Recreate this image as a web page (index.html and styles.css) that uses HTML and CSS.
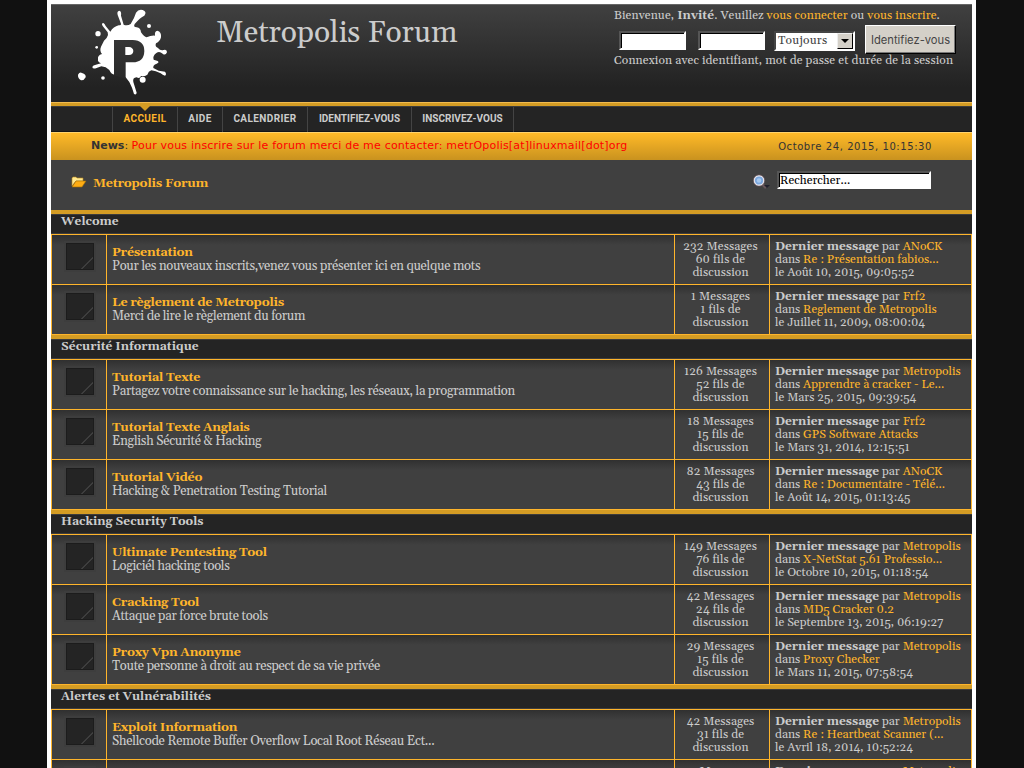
FILE: index.html
```html
<!DOCTYPE html>
<html lang="fr">
<head>
<meta charset="utf-8">
<title>Metropolis Forum</title>
<link rel="stylesheet" href="styles.css">
</head>
<body>
<div class="wrapper">
<header class="header">
  <svg class="logo" width="92" height="90" viewBox="111 27 276 270">
    <path d="M157 201Q158 196 165 195L183 190Q172 186 174 178Q172 166 186 162Q178 152 183 140Q188 130 192 122Q202 114 204 105L203 97L188 78Q183 70 190 69Q194 70 197 78L211 95Q220 80 236 76Q244 76 243 71L233 45Q230 33 238 32Q245 34 243 47L251 74Q262 78 272 72Q283 55 288 38Q295 27 308 30Q322 35 313 47Q300 53 284 72Q279 82 290 82Q302 84 303 97Q312 110 320 112Q333 106 345 107Q343 93 352 92Q365 95 363 112Q360 124 348 130Q344 140 353 143Q362 153 370 150Q381 146 381 157Q376 168 368 161Q358 152 349 159Q337 168 341 179L353 183Q359 188 350 191Q338 195 340 204L356 212L375 215Q381 223 375 227Q368 226 362 220Q347 212 334 211Q325 214 322 224Q313 230 303 228Q299 237 290 232Q277 233 280 246L290 278Q289 286 282 282L276 263Q271 247 257 232L224 224Q214 224 208 210Q198 200 184 199L168 205Q157 207 157 201Z"/>
    <circle cx="174" cy="101" r="8"/><circle cx="327" cy="78" r="6"/><circle cx="170" cy="142" r="4"/><path d="M114 224Q119 215 126 219Q139 223 137 232Q132 242 123 241Q113 235 114 224Z"/><circle cx="189" cy="234" r="5.500"/><circle cx="308" cy="239" r="9"/>
    <path fill="url(#shade)" d="M222 120H278Q313 121 313 153Q312 187 278 187H257V236L222 226Z"/><path d="M256 141H267Q279 142 280 153Q279 165 267 165H256Z"/>
    <defs><linearGradient id="shade" x2="0" y2="1"><stop stop-color="#363636"/><stop offset="1" stop-color="#292929"/></linearGradient></defs>
  </svg>
  <h1 class="site-title"><span>Metropolis Forum</span></h1>
  <div class="login">
    <p class="welcome">Bienvenue, <b>Invité</b>. Veuillez <a>vous connecter</a> ou <a>vous inscrire</a>.</p>
    <div class="login-row"><input class="field user"><input class="field pass" type="password"><div class="select"><span>Toujours</span><i></i></div><button class="submit">Identifiez-vous</button></div>
    <p class="hint">Connexion avec identifiant, mot de passe et durée de la session</p>
  </div>
</header>
<div class="gold"></div>
<nav class="nav"><a class="active n1">Accueil</a><a class="n2">Aide</a><a class="n3">Calendrier</a><a class="n4">Identifiez-vous</a><a class="n5">Inscrivez-vous</a></nav>
<div class="news"><span class="news-text"><b>News</b>: <em>Pour vous inscrire sur le forum merci de me contacter: metrOpolis[at]linuxmail[dot]org</em></span><span class="date">Octobre 24, 2015, 10:15:30</span></div>
<div class="crumbs">
  <svg class="folder" width="16" height="12" viewBox="0 0 16 12"><path fill="#ffe991" stroke="#b98717" stroke-width=".6" d="M1 10V2L2 1H5L6 2H12V5H5Z"/><path fill="#ffad13" stroke="#9f6b08" stroke-width=".6" d="M1 11L5 5H15L11 11Z"/></svg>
  <span class="crumb">Metropolis Forum</span>
  <svg class="magnifier" width="18" height="16" viewBox="0 0 18 16"><path stroke="#66565a" stroke-width="2.500" d="M9 10L13 14"/><circle cx="6" cy="6.500" r="4.800" fill="#7ba7de" stroke="#e4e4eb" stroke-width="1.400"/><circle cx="6" cy="6.500" r="5.700" fill="none" stroke="#6f565a" stroke-width=".6"/><circle cx="6" cy="6.500" r="2.300" fill="#a7c9ef"/><path fill="#20202c" d="M11 11H17L14 14Z"/></svg>
  <input class="field search" value="Rechercher...">
</div>
<main>
<section><h2>Welcome</h2>
<div class="row"><div class="ico"><i></i></div><div class="desc"><h3>Présentation</h3><p>Pour les nouveaux inscrits,venez vous présenter ici en quelque mots</p></div><div class="stats">232 Messages<br>60 fils de<br>discussion</div><div class="last"><b>Dernier message</b> par <a>ANoCK</a><br>dans <a>Re : Présentation fabios...</a><br>le Août 10, 2015, 09:05:52</div></div>
<div class="row"><div class="ico"><i></i></div><div class="desc"><h3>Le règlement de Metropolis</h3><p>Merci de lire le règlement du forum</p></div><div class="stats">1 Messages<br>1 fils de<br>discussion</div><div class="last"><b>Dernier message</b> par <a>Frf2</a><br>dans <a>Reglement de Metropolis</a><br>le Juillet 11, 2009, 08:00:04</div></div>
</section>
<section><h2>Sécurité Informatique</h2>
<div class="row"><div class="ico"><i></i></div><div class="desc"><h3>Tutorial Texte</h3><p>Partagez votre connaissance sur le hacking, les réseaux, la programmation</p></div><div class="stats">126 Messages<br>52 fils de<br>discussion</div><div class="last"><b>Dernier message</b> par <a>Metropolis</a><br>dans <a>Apprendre à cracker - Le...</a><br>le Mars 25, 2015, 09:39:54</div></div>
<div class="row"><div class="ico"><i></i></div><div class="desc"><h3>Tutorial Texte Anglais</h3><p>English Sécurité &amp; Hacking</p></div><div class="stats">18 Messages<br>15 fils de<br>discussion</div><div class="last"><b>Dernier message</b> par <a>Frf2</a><br>dans <a>GPS Software Attacks</a><br>le Mars 31, 2014, 12:15:51</div></div>
<div class="row"><div class="ico"><i></i></div><div class="desc"><h3>Tutorial Vidéo</h3><p>Hacking &amp; Penetration Testing Tutorial</p></div><div class="stats">82 Messages<br>43 fils de<br>discussion</div><div class="last"><b>Dernier message</b> par <a>ANoCK</a><br>dans <a>Re : Documentaire - Télé...</a><br>le Août 14, 2015, 01:13:45</div></div>
</section>
<section><h2>Hacking Security Tools</h2>
<div class="row"><div class="ico"><i></i></div><div class="desc"><h3>Ultimate Pentesting Tool</h3><p>Logiciél hacking tools</p></div><div class="stats">149 Messages<br>76 fils de<br>discussion</div><div class="last"><b>Dernier message</b> par <a>Metropolis</a><br>dans <a>X-NetStat 5.61 Professio...</a><br>le Octobre 10, 2015, 01:18:54</div></div>
<div class="row"><div class="ico"><i></i></div><div class="desc"><h3>Cracking Tool</h3><p>Attaque par force brute tools</p></div><div class="stats">42 Messages<br>24 fils de<br>discussion</div><div class="last"><b>Dernier message</b> par <a>Metropolis</a><br>dans <a>MD5 Cracker 0.2</a><br>le Septembre 13, 2015, 06:19:27</div></div>
<div class="row"><div class="ico"><i></i></div><div class="desc"><h3>Proxy Vpn Anonyme</h3><p>Toute personne à droit au respect de sa vie privée</p></div><div class="stats">29 Messages<br>15 fils de<br>discussion</div><div class="last"><b>Dernier message</b> par <a>Metropolis</a><br>dans <a>Proxy Checker</a><br>le Mars 11, 2015, 07:58:54</div></div>
</section>
<section><h2>Alertes et Vulnérabilités</h2>
<div class="row"><div class="ico"><i></i></div><div class="desc"><h3>Exploit Information</h3><p>Shellcode Remote Buffer Overflow Local Root Réseau Ect...</p></div><div class="stats">42 Messages<br>31 fils de<br>discussion</div><div class="last"><b>Dernier message</b> par <a>Metropolis</a><br>dans <a>Re : Heartbeat Scanner (...</a><br>le Avril 18, 2014, 10:52:24</div></div>
<div class="row"><div class="ico"><i></i></div><div class="desc"></div><div class="stats">7 Messages</div><div class="last"><b>Dernier message</b> par <a>Metropolis</a></div></div>
</section>
</main>
</div>
</body>
</html>
```
FILE: styles.css
```css
* { box-sizing: border-box; }
body { margin: 0; height: 768px; overflow: hidden; background: #111; color: #ccc; font: 12px/13px Georgia, Gelasio, "Liberation Serif", serif; }
h1, h2, h3, p { margin: 0; }
a { color: #ffb52b; }
.wrapper { width: 929px; height: 768px; margin-left: 47px; overflow: hidden; border: solid #fff; border-width: 4px 4px 0; background: #404040; }
.header { height: 98px; display: flex; align-items: flex-start; border-top: 1px solid #666; background: linear-gradient(#404040, #222 85%); }
.logo { flex: none; margin: 4px 0 0 26px; fill: #fff; }
.site-title { flex: none; width: 445px; padding: 10px 0 0 47px; font-size: 30px; line-height: 36px; letter-spacing: -.05px; font-weight: 400; white-space: nowrap; }
.login { flex: none; width: 350px; white-space: nowrap; }
.welcome, .hint { letter-spacing: .11px; }
.welcome { padding-top: 4px; }
.login-row { height: 31px; display: flex; align-items: flex-start; padding: 3px 0 0 4px; }
.field { border: 2px solid; border-color: #555 #fff #fff #555; outline: 0; background: #fff; padding: 0; font: 12px/14px Georgia, Gelasio, "Liberation Serif", serif; border-radius: 0; box-shadow: inset 1px 1px #000; color: #000; }
.user, .pass { width: 67px; height: 19px; margin: 6px 12px 0 1px; }
.pass { margin: 6px 9px 0 0; }
.select { width: 81px; height: 20px; display: flex; justify-content: space-between; margin: 6px 10px 0 0; padding: 0 0 0 2px; border: 2px solid; border-color: #444 #fff #fff #444; background: #fff; color: #444; line-height: 15px; letter-spacing: .2px; }
.select i { width: 16px; height: 16px; border: 1px solid; border-color: #eee #000 #000 #eee; background: #d4d0c8; display: grid; place-items: center; }
.select i::before { content: ""; border: 4px solid transparent; border-top-color: #000; border-bottom: 0; }
.submit { width: 91px; height: 29px; padding: 0; border: 1px solid; border-color: #fff #000 #000 #fff; box-shadow: inset -1px -1px #777; border-radius: 0; background: #d4d0c8; color: #444; font: 11.2px/20px Inter, sans-serif; }
.hint { padding-top: 1px; }
.gold { height: 4px; background: #d49c24; border-top: 1px solid #f0bb51; }
.nav { height: 26px; display: flex; padding-left: 61px; background: #242424; border: solid #3c3c3c; border-width: 1px 0 0; box-shadow: inset 0 -1px #151515; }
.nav a { position: relative; text-align: center; border-right: 1px solid #444; color: #ccc; font: bold 10px/24px "Liberation Sans Narrow", Roboto, sans-serif; letter-spacing: .4px; text-transform: uppercase; white-space: nowrap; }
.nav .active { color: #ffb52b; border-left: 1px solid #444; }
.active::before { content: ""; position: absolute; left: 27px; top: -1px; border: 5px solid transparent; border-top-color: #d49c24; border-bottom: 0; }
.n1 { width: 66px; } .n2 { width: 45px; } .n3 { width: 85px; } .n4 { width: 104px; } .n5 { width: 102px; }
.nav .n4, .nav .n5 { letter-spacing: 0; }
.news { height: 28px; display: flex; justify-content: space-between; padding: 0 40px; border-top: 1px solid #ffd36d; background: linear-gradient(#ffba28, #c9921f); color: #333; font: 11px/25px "DejaVu Sans", sans-serif; }
.news em { font-style: normal; color: #f00; letter-spacing: .2px; }
.date { font-size: 10px; line-height: 27px; letter-spacing: .58px; }
.crumbs { height: 50px; display: flex; align-items: flex-start; padding: 11px 41px 0 20px; }
.folder { margin-top: 5px; }
.crumb { width: 666px; padding: 4px 0 0 6px; font-size: 12.6px; line-height: 17px; letter-spacing: -.22px; font-weight: bold; color: #ffb52b; }
.magnifier { margin: 3px 6px 0 0; }
.search { width: 154px; height: 18px; padding-left: 1px; }
h2 { height: 24px; padding: 0 10px; font-size: 12px; line-height: 16px; border-top: 4px solid #d49c24; border-bottom: 1px solid #3d3d3d; background: #242424; box-shadow: inset 0 1px #3c3c3c; }
section { border-bottom: 1px solid #ffb52b; }
.row { height: 50px; display: grid; grid-template-columns: 55px 568px 95px 203px; border-top: 1px solid #ffb52b; border-right: 1px solid #ffb52b; background: linear-gradient(#303030, #404040 10px); }
.row > div { border-left: 1px solid #ffb52b; white-space: nowrap; overflow: hidden; }
.ico i { display: block; width: 28px; height: 27px; margin: 8px 0 0 14px; border: 1px solid #1c1c1c; background: linear-gradient(135deg, transparent 0 76%, #555 77% 78%, transparent 79%) #242424; box-shadow: 0 0 0 2px #3d3d3d; }
.desc { padding: 10px 5px 0; }
.desc h3 { font-size: 12.6px; line-height: 14px; letter-spacing: -.25px; color: #ffb52b; }
.desc p { font-size: 13px; line-height: 15px; letter-spacing: -.3px; }
.stats { padding: 5px 3px 0 0; text-align: center; letter-spacing: .08px; }
.last { padding: 5px 5px 0; }
```
